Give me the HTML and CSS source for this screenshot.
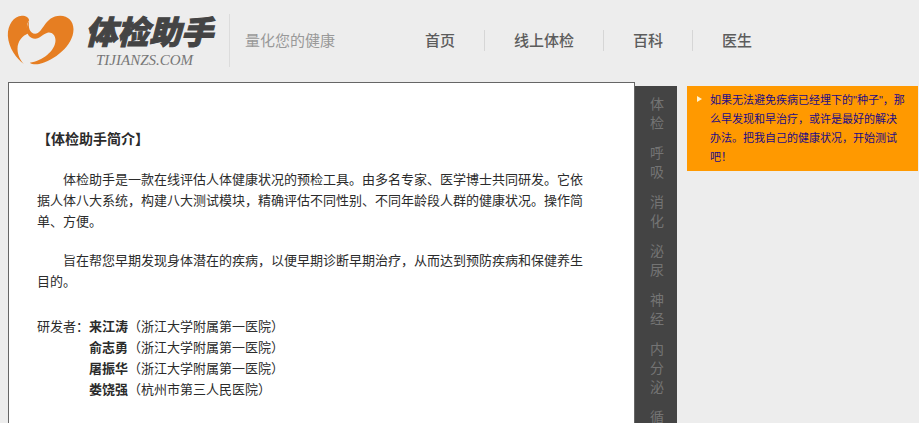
FILE: index.html
```html
<!DOCTYPE html>
<html lang="zh-CN">
<head>
<meta charset="utf-8">
<title>体检助手</title>
<link rel="stylesheet" href="styles.css">
</head>
<body>
<header class="header">
  <a class="brand" href="#">
    <svg class="brand-mark" viewBox="0 0 200 150" aria-hidden="true">
      <path fill="#e67e22" d="M50 147C28 130 4 99 2 62C1 29 20 3 44 2C57 2 65 8 66 16C57 28 57 45 66 54C44 62 31 80 31 101C31 121 41 137 50 147Z"/>
      <path fill="#e67e22" d="M66 17C62 36 68 56 84 56C108 56 112 2 159 2C183 2 199 18 199 43C199 93 140 137 96 147C84 149 72 147 68 143C104 139 145 108 145 76C145 60 134 50 121 53C106 57 98 71 84 71C67 71 57 56 59 39C60 29 63 21 66 17Z"/>
    </svg>
    <span class="brand-text">
      <span class="brand-name">体检助手</span>
      <span class="brand-domain">TIJIANZS.COM</span>
    </span>
  </a>
  <p class="tagline">量化您的健康</p>
  <nav class="nav">
    <a href="#">首页</a>
    <a href="#">线上体检</a>
    <a href="#">百科</a>
    <a href="#">医生</a>
  </nav>
</header>
<div class="page">
  <main class="panel">
    <h1>【体检助手简介】</h1>
    <p>体检助手是一款在线评估人体健康状况的预检工具。由多名专家、医学博士共同研发。它依<br>据人体八大系统，构建八大测试模块，精确评估不同性别、不同年龄段人群的健康状况。操作简<br>单、方便。</p>
    <p>旨在帮您早期发现身体潜在的疾病，以便早期诊断早期治疗，从而达到预防疾病和保健养生<br>目的。</p>
    <div class="team">
      <span>研发者：</span>
      <ul>
        <li><b>来江涛</b>（浙江大学附属第一医院）</li>
        <li><b>俞志勇</b>（浙江大学附属第一医院）</li>
        <li><b>屠振华</b>（浙江大学附属第一医院）</li>
        <li><b>娄饶强</b>（杭州市第三人民医院）</li>
      </ul>
    </div>
  </main>
  <nav class="systems">
    <a href="#">体检</a>
    <a href="#">呼吸</a>
    <a href="#">消化</a>
    <a href="#">泌尿</a>
    <a href="#">神经</a>
    <a href="#">内分泌</a>
    <a href="#">循环</a>
  </nav>
  <aside class="notice">
    <a href="#">如果无法避免疾病已经埋下的"种子"，那<br>么早发现和早治疗，或许是最好的解决<br>办法。把我自己的健康状况，开始测试<br>吧！</a>
  </aside>
</div>
</body>
</html>
```
FILE: styles.css
```css
* { box-sizing: border-box; }

body {
  margin: 0;
  height: 100vh;
  overflow: hidden;
  display: flex;
  flex-direction: column;
  background: #ededed;
  color: #2b2b2b;
  font: 13px/21px "Liberation Sans", "Noto Sans CJK SC", sans-serif;
}

a { color: inherit; text-decoration: none; }
p, h1, ul { margin: 0; padding: 0; }

.header {
  display: flex;
  align-items: center;
  padding: 14px 8px 15px 7px;
}

.brand {
  display: flex;
  align-items: flex-start;
  height: 53px;
  padding-right: 16px;
  border-right: 1px solid #dcdcdc;
}
.brand-mark { width: 67px; height: 50px; margin-top: 1px; }
.brand-text {
  display: flex;
  flex-direction: column;
  margin-left: 11px;
}
.brand-name {
  color: #444;
  font-family: "Noto Sans CJK SC", sans-serif;
  font-size: 32px;
  font-style: italic;
  font-weight: 900;
  line-height: 32px;
  -webkit-text-stroke: 1px #444;
}
.brand-domain {
  margin: 4px 0 0 11px;
  color: #777;
  font-family: "Liberation Serif", serif;
  font-size: 15px;
  font-style: italic;
  line-height: 20px;
}

.tagline {
  margin-left: 15px;
  color: #999;
  font-size: 15px;
}

.nav { display: flex; margin-left: 61px; }
.nav a {
  padding: 0 29px;
  color: #5c5c5c;
  font-size: 15px;
  font-weight: 500;
}
.nav a + a { border-left: 1px solid #d6d6d6; }

.page {
  flex: 1;
  min-height: 0;
  display: flex;
  padding: 0 1px 0 8px;
}

.panel {
  flex: 1;
  padding: 46px 28px 0;
  background: #fff;
  border: 1px solid #666;
  border-bottom: 0;
  white-space: nowrap;
}
.panel h1 { margin-bottom: 19px; font-size: 14px; }
.panel p { margin-bottom: 18px; text-indent: 2em; }
.team { display: flex; padding-top: 6px; }
.team ul { list-style: none; }

.systems {
  width: 42px;
  margin-top: 4px;
  padding: 9px 13px 0 15px;
  display: flex;
  flex-direction: column;
  gap: 11px;
  overflow: hidden;
  background: #444;
  color: #747474;
  font-size: 14px;
  line-height: 19px;
}
.systems a { flex: none; width: 14px; word-break: break-all; }

.notice {
  align-self: flex-start;
  display: flex;
  width: 231px;
  margin: 4px 0 0 10px;
  padding: 5px 0 4px 10px;
  background: #f90;
  color: #1c0a86;
  font-size: 11px;
  line-height: 19px;
  white-space: nowrap;
}
.notice::before {
  content: "";
  width: 0;
  height: 0;
  margin: 5px 8px 0 0;
  border-left: 5px solid #fff3d0;
  border-top: 3px solid transparent;
  border-bottom: 3px solid transparent;
}
```
